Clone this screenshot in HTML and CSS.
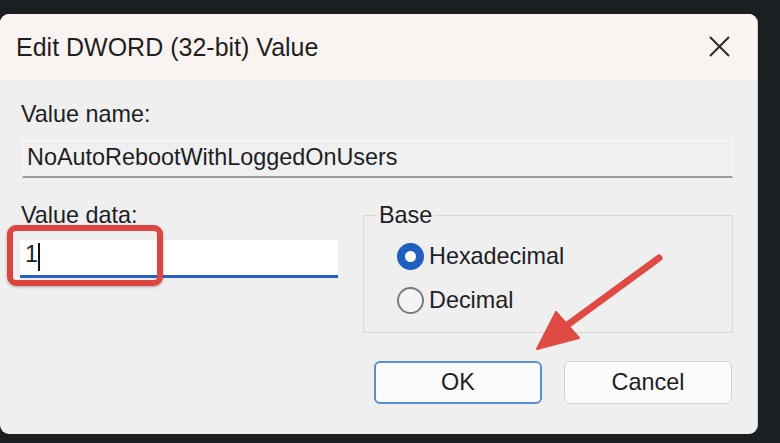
FILE: index.html
```html
<!DOCTYPE html>
<html>
<head>
<meta charset="utf-8">
<link rel="stylesheet" href="styles.css">
</head>
<body>
<div class="dialog">
  <div class="titlebar">
    <span class="title">Edit DWORD (32-bit) Value</span>
    <svg class="close" width="21" height="21" viewBox="0 0 21 21"><path d="M1 1 L20 20 M20 1 L1 20" stroke="#2b2b2b" stroke-width="2" fill="none"/></svg>
  </div>
  <div class="content">
    <div class="label">Value name:</div>
    <div class="name-field">NoAutoRebootWithLoggedOnUsers</div>
    <div class="lower">
      <div class="data-col">
        <div class="label">Value data:</div>
        <div class="data-field"><span class="val">1</span><span class="caret"></span></div>
      </div>
      <fieldset class="base">
        <legend>Base</legend>
        <div class="radio-row"><span class="radio checked"></span><span class="rlabel">Hexadecimal</span></div>
        <div class="radio-row"><span class="radio"></span><span class="rlabel">Decimal</span></div>
      </fieldset>
    </div>
    <div class="buttons">
      <div class="btn primary">OK</div>
      <div class="btn">Cancel</div>
    </div>
  </div>
</div>
<div class="highlight"></div>
<svg class="arrow" width="780" height="443" viewBox="0 0 780 443">
  <line x1="659" y1="258" x2="566" y2="326" stroke="#df4a44" stroke-width="7" stroke-linecap="round"/>
  <polygon points="537,349 556,312 579,338" fill="#df4a44" stroke="#df4a44" stroke-width="2" stroke-linejoin="round"/>
</svg>
</body>
</html>
```
FILE: styles.css
```css
html, body {
  margin: 0;
  padding: 0;
}
body {
  width: 780px;
  height: 443px;
  background: #1c1f22;
  font-family: "Liberation Sans", Arial, sans-serif;
  color: #1e1e24;
  position: relative;
  overflow: hidden;
  padding-top: 14px;
  box-sizing: border-box;
}
.dialog {
  width: 758px;
  height: 420px;
  background: #efefef;
  border-radius: 9px;
  overflow: hidden;
  box-sizing: border-box;
  border-right: 1px solid #cfcfcf;
}
.titlebar {
  height: 66px;
  background: #f9f4f2;
  display: flex;
  align-items: center;
  justify-content: space-between;
  padding: 0 27px 0 16px;
}
.title {
  font-size: 25px;
  color: #1f1f1f;
}
.close {
  display: block;
  margin-top: -2px;
}
.content {
  padding: 21px 24px 0 21px;
}
.label {
  font-size: 23.4px;
  line-height: 26px;
}
.name-field {
  margin-top: 13px;
  margin-left: 1px;
  height: 38px;
  box-sizing: border-box;
  border: 1px solid #fbfbfb;
  border-bottom: 2px solid #9a9a9a;
  background: #f0f0f0;
  font-size: 23.4px;
  line-height: 26px;
  padding: 3px 4px 0 4px;
}
.lower {
  margin-top: 24px;
  display: grid;
  grid-template-columns: 317px 1fr;
  column-gap: 25px;
  align-items: start;
}
.data-field {
  margin-top: 12px;
  margin-left: -1px;
  width: 318px;
  height: 38px;
  box-sizing: border-box;
  background: #ffffff;
  border-bottom: 3px solid #255fc6;
  display: flex;
  align-items: flex-start;
  padding-left: 5px;
  font-size: 23.4px;
  line-height: 26px;
}
.val {
  padding-top: 1px;
}
.caret {
  width: 1.5px;
  height: 28px;
  margin-top: 3px;
  background: #151515;
}
.base {
  margin: 0;
  padding: 6px 0 10px 33px;
  border: 1px solid #d9d9d9;
  min-inline-size: 0;
}
.base legend {
  font-size: 23.4px;
  line-height: 26px;
  padding: 0 2px;
  margin-left: -20px;
}
.radio-row {
  height: 44px;
  display: flex;
  align-items: center;
  gap: 5px;
  font-size: 23.4px;
  line-height: 26px;
}
.radio {
  width: 27px;
  height: 27px;
  box-sizing: border-box;
  border-radius: 50%;
  border: 2px solid #7b7b7b;
  background: #f4f4f4;
  flex: none;
}
.radio.checked {
  border: 8px solid #205fc0;
  background: #ffffff;
}
.buttons {
  margin-top: 28px;
  display: flex;
  justify-content: flex-end;
  gap: 22px;
  margin-right: 1px;
}
.btn {
  width: 168px;
  height: 43px;
  box-sizing: border-box;
  border: 1px solid #d2d2d2;
  border-radius: 6px;
  background: #fbfbfb;
  display: flex;
  align-items: center;
  justify-content: center;
  font-size: 23.4px;
  color: #1e1e24;
}
.btn.primary {
  border: 2px solid #5a8ddb;
}
.highlight {
  position: absolute;
  left: 7px;
  top: 225px;
  width: 156px;
  height: 61px;
  box-sizing: border-box;
  border: 6px solid #dd4541;
  border-radius: 9px;
  box-shadow: 0 1px 3px rgba(0,0,0,0.3);
}
.arrow {
  position: absolute;
  left: 0;
  top: 0;
  pointer-events: none;
}
```
